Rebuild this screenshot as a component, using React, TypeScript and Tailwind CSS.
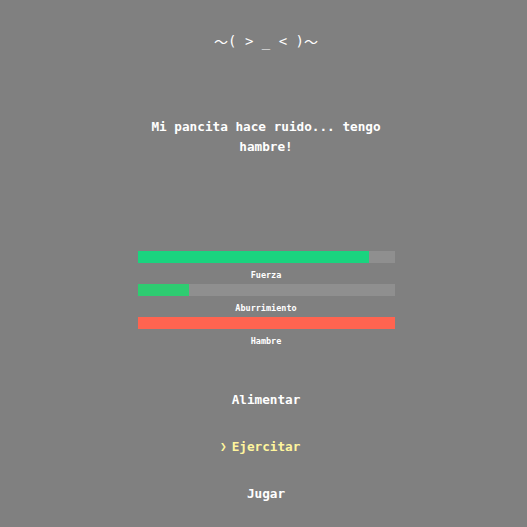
const stats = [
  { label: 'Fuerza', value: 90, color: 'bg-[#1ad47f]' },
  { label: 'Aburrimiento', value: 20, color: 'bg-[#2ecc71]' },
  { label: 'Hambre', value: 100, color: 'bg-[#ff6450]' },
];

const actions = ['Alimentar', 'Ejercitar', 'Jugar'];

export default function App() {
  const selected = 1;
  return (
    <div className="min-h-[527px] w-full bg-[#808080] pl-[5px] text-white font-['DejaVu_Sans_Mono',monospace] font-bold">
      <div className="flex flex-col items-center">
        <div className="mt-[31px] flex items-center text-[14px] leading-[20px] whitespace-pre">
          <span className="font-['Noto_Sans_CJK_JP',sans-serif] font-normal">〜</span>
          <span className="font-normal">( {'>'} _ {'<'} )</span>
          <span className="font-['Noto_Sans_CJK_JP',sans-serif] font-normal">〜</span>
        </div>

        <p className="mt-[66px] w-[250px] text-center text-[12.7px] leading-[20px]">
          Mi pancita hace ruido... tengo hambre!
        </p>

        <div className="mt-[94px] flex w-[257px] flex-col gap-[3px]">
          {stats.map((s) => (
            <div key={s.label} className="flex flex-col">
              <div className="h-[12px] w-full bg-[#8f8f8f]">
                <div className={`h-full ${s.color}`} style={{ width: `${s.value}%` }} />
              </div>
              <span className="mt-[6px] text-center text-[8.5px] leading-[12px]">{s.label}</span>
            </div>
          ))}
        </div>

        <ul className="mt-[43px] flex flex-col items-center gap-[27px]">
          {actions.map((a, i) => (
            <li
              key={a}
              className={`relative text-[12.7px] leading-[20px] ${i === selected ? 'text-[#fff59d]' : 'text-white'}`}
            >
              {i === selected && <span className="absolute right-full mr-[5px] text-[11px]">❯</span>}
              {a}
            </li>
          ))}
        </ul>
      </div>
    </div>
  );
}
